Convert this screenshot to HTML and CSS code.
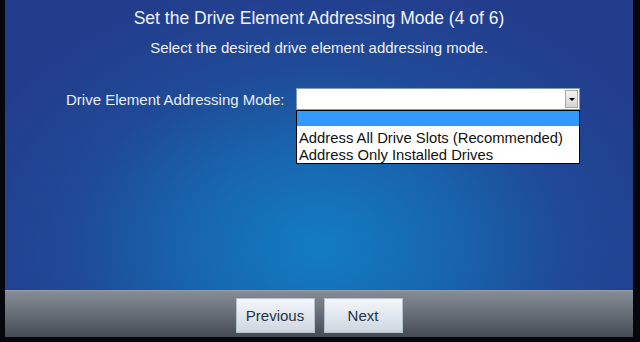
FILE: index.html
```html
<!DOCTYPE html>
<html lang="en">
<head>
    <meta charset="UTF-8">
    <title>Set the Drive Element Addressing Mode</title>
    <link rel="stylesheet" href="styles.css">
</head>
<body>
<div class="frame">
    <div class="content">
        <h2 class="title">Set the Drive Element Addressing Mode (4 of 6)</h2>
        <p class="subtitle">Select the desired drive element addressing mode.</p>

        <div class="field">
            <label class="field-label">Drive Element Addressing Mode:</label>
            <div class="combo">
                <div class="combo-box">
                    <span class="combo-value"></span>
                    <span class="combo-arrow"></span>
                </div>
                <ul class="combo-list">
                    <li class="selected">&nbsp;</li>
                    <li>Address All Drive Slots (Recommended)</li>
                    <li>Address Only Installed Drives</li>
                </ul>
            </div>
        </div>
    </div>

    <div class="footer">
        <button class="nav-btn">Previous</button>
        <button class="nav-btn">Next</button>
    </div>
</div>
</body>
</html>
```

FILE: styles.css
```css
body {
    margin: 0;
    background: #000;
    font-family: "Liberation Sans", Arial, sans-serif;
}
.frame {
    width: 640px;
    height: 342px;
    box-sizing: border-box;
    border-left: 5px solid #05070c;
    border-right: 7px solid #05070c;
    border-bottom: 5px solid #05070c;
    display: flex;
    flex-direction: column;
}
.content {
    flex: 1;
    background: radial-gradient(ellipse 60% 95% at 50% 85%, #127dc2 0%, #1865ae 35%, #1f4a97 65%, #233c8c 100%);
    color: #eef2f8;
    padding-top: 7px;
}
.title {
    margin: 0;
    font-size: 17.5px;
    font-weight: normal;
    line-height: 22px;
    text-align: center;
}
.subtitle {
    margin: 10px 0 0 0;
    font-size: 15px;
    line-height: 18px;
    text-align: center;
}
.field {
    display: flex;
    align-items: center;
    margin-top: 31px;
    padding-left: 61px;
}
.field-label {
    font-size: 15px;
    width: 230px;
    color: #e8edf4;
}
.combo {
    position: relative;
    width: 284px;
}
.combo-box {
    height: 22px;
    background: #fff;
    border: 1px solid #7f9db9;
    box-sizing: border-box;
    display: flex;
    justify-content: flex-end;
    align-items: center;
    padding-right: 1px;
}
.combo-arrow {
    width: 13px;
    height: 18px;
    background: linear-gradient(#f2f2f2, #d4d4d4);
    border: 1px solid #a9a9a9;
    box-sizing: border-box;
    position: relative;
}
.combo-arrow::after {
    content: "";
    position: absolute;
    left: 3px;
    top: 7px;
    border-left: 3px solid transparent;
    border-right: 3px solid transparent;
    border-top: 3px solid #000;
}
.combo-list {
    position: absolute;
    left: 0;
    top: 22px;
    width: 284px;
    box-sizing: border-box;
    margin: 0;
    padding: 0;
    list-style: none;
    background: #fff;
    border: 1px solid #000;
    color: #111;
    font-size: 14.8px;
}
.combo-list li {
    height: 17px;
    line-height: 18px;
    padding-left: 2px;
}
.combo-list li.selected {
    background: #3399ff;
    height: 15px;
    margin-bottom: 3px;
}
.footer {
    height: 47px;
    background: linear-gradient(#9aa0a8 0px, #858b94 2px, #686e77 50%, #454b53 100%);
    display: flex;
    justify-content: center;
    align-items: flex-start;
    gap: 9px;
    padding-top: 8px;
    box-sizing: border-box;
}
.nav-btn {
    width: 79px;
    height: 35px;
    border: 1px solid #b8c2cc;
    background: linear-gradient(#f4f7fa, #dde4ec 60%, #ccd5de);
    color: #1f3148;
    font-family: "Liberation Sans", Arial, sans-serif;
    font-size: 15px;
    cursor: pointer;
    padding: 0;
}
```
